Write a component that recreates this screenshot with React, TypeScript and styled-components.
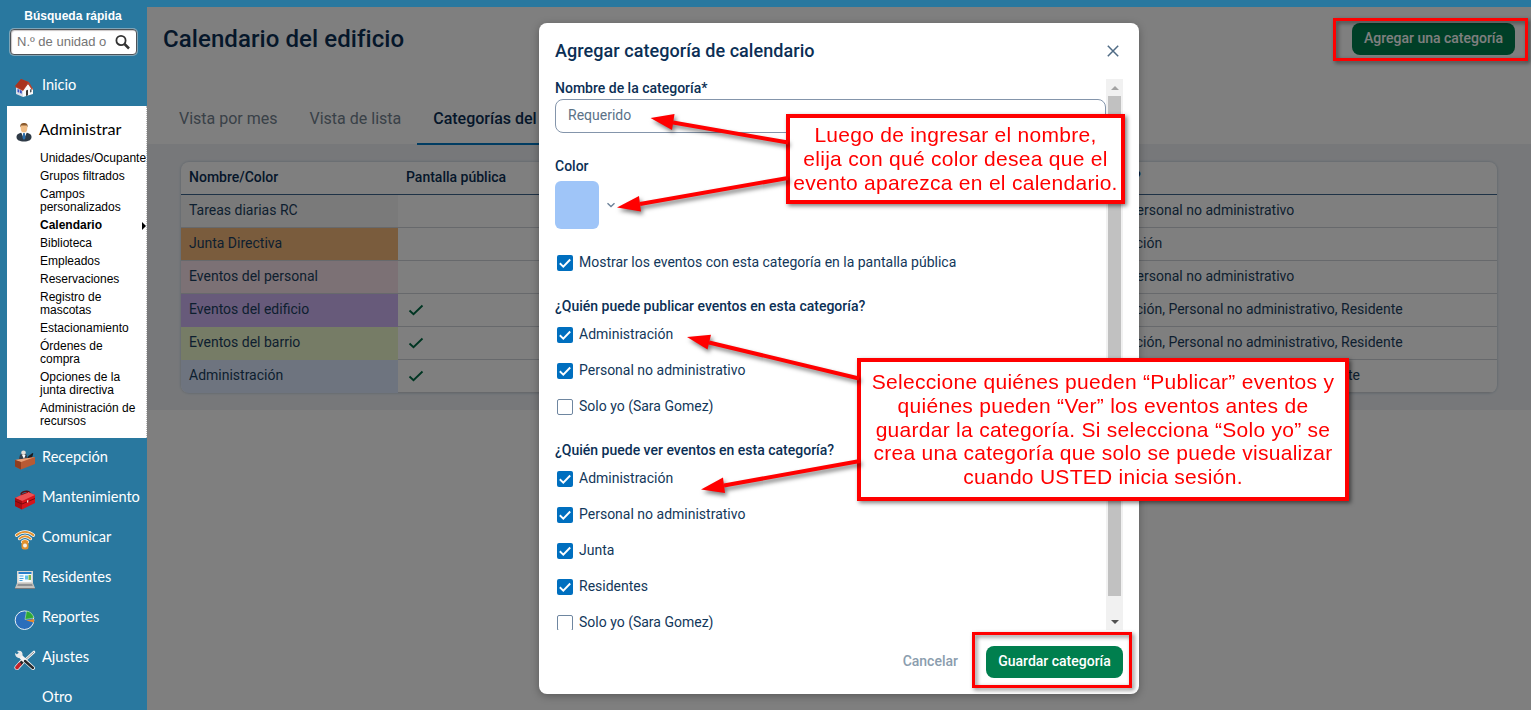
import React from 'react'
import styled, { createGlobalStyle } from 'styled-components'

const GlobalStyle = createGlobalStyle`
  * {
    box-sizing: border-box;
  }
  body {
    margin: 0;
    overflow: hidden;
    font-family: Roboto, sans-serif;
    color: #12375a;
  }
`

const Page = styled.div`
  position: relative;
  display: flex;
  width: 1531px;
  height: 710px;
  overflow: hidden;
  background: #29789f;
`

/* Sidebar */

const Sidebar = styled.aside`
  display: flex;
  flex-direction: column;
  flex: none;
  width: 147px;
`

const QuickSearch = styled.div`
  flex: none;
  height: 66px;
  padding: 9px 9px 0 10px;
`

const SearchTitle = styled.div`
  height: 20px;
  margin-right: 2px;
  text-align: center;
  color: #fff;
  font: bold 12px/14px 'Liberation Sans', sans-serif;
`

const SearchBox = styled.div`
  display: flex;
  align-items: center;
  justify-content: space-between;
  width: 127px;
  height: 26px;
  padding: 0 5px 0 6px;
  border: 1px solid #4d5358;
  border-radius: 4px;
  background: #fff;
  box-shadow: inset 1px 1px 1px #c9c5c5, 0 0 0 1px #7fa5b8;
  color: #757575;
  font: 13px/16px 'Liberation Sans', sans-serif;
  white-space: nowrap;
`

const NavItem = styled.div<{ $active?: boolean }>`
  display: flex;
  align-items: center;
  flex: none;
  height: 40px;
  padding-left: ${p => p.$active ? 7 : 14}px;
  gap: ${p => p.$active ? 5 : 6}px;
  color: ${p => p.$active ? '#000' : '#fff'};
  font: ${p => p.$active ? '16.200px' : '14.600px'}/20px Lato, sans-serif;
  svg {
    flex: none;
    margin-top: 3px;
  }
`

const NavText = styled.span<{ $first?: boolean }>`
  margin-top: -2px;
  margin-left: ${p => p.$first ? 2 : 0}px;
`

const IconSpace = styled.span`
  width: 22px;
`

const OpenSection = styled.div`
  flex: none;
  height: 332px;
  margin-left: 7px;
  padding-top: 4px;
  border-right: 1px dotted #bbb;
  background: #fff;
  overflow: hidden;
`

const SubList = styled.ul`
  display: flex;
  flex-direction: column;
  gap: 5px;
  margin: 2px 0 0;
  padding: 0 0 0 33px;
  list-style: none;
`

const SubItem = styled.li<{ $current?: boolean }>`
  display: flex;
  align-items: center;
  justify-content: space-between;
  color: #000;
  font: ${p => p.$current ? 'bold' : 'normal'} 12px/13px 'Liberation Sans', sans-serif;
  white-space: pre;
`

/* Main area */

const Main = styled.main`
  flex: 1;
  margin-top: 7px;
  background: #fff;
`

const Header = styled.header`
  display: flex;
  justify-content: space-between;
  height: 85px;
  padding: 16px 16px 0;
`

const PageTitle = styled.h1`
  margin: 0;
  color: #0b2f55;
  font-size: 24px;
  font-weight: 500;
  line-height: 32px;
  letter-spacing: 0.08px;
`

const PrimaryButton = styled.button<{ $width: number }>`
  width: ${p => p.$width}px;
  height: 32px;
  padding: 0 0 2px;
  border: none;
  border-radius: 8px;
  background: #007f4e;
  color: #fff;
  font: 500 14px/20px Roboto, sans-serif;
  white-space: nowrap;
`

const Tabs = styled.nav`
  display: flex;
  height: 52px;
  padding-left: 16px;
`

const Tab = styled.div<{ $active?: boolean }>`
  height: 53px;
  padding: 17px 16px 0;
  border-bottom: 2px solid ${p => p.$active ? '#0078c4' : 'transparent'};
  color: ${p => p.$active ? '#0b2f55' : '#73828f'};
  font-size: 16px;
  font-weight: ${p => p.$active ? 500 : 400};
  line-height: 20px;
  white-space: nowrap;
`

const Panel = styled.section`
  height: 266px;
  padding: 18px 34px;
  background: #eef1f5;
`

const Table = styled.div`
  border-radius: 8px;
  background: #fff;
  box-shadow: 0 0 2px 1px #cfd8e2;
  overflow: hidden;
`

const Row = styled.div<{ $head?: boolean }>`
  display: grid;
  grid-template-columns: 217px 328px 334px 1fr;
  height: 33px;
  border-bottom: 1px solid ${p => p.$head ? '#3c648c' : '#cfd3d8'};
  font-size: 14px;
  font-weight: ${p => p.$head ? 500 : 400};
  color: ${p => p.$head ? '#0b2f55' : '#1b3f60'};
  line-height: 18px;
`

const Cell = styled.div<{ $tint?: string }>`
  padding: 6px 8px;
  background: ${p => p.$tint ?? 'transparent'};
  white-space: nowrap;
`

const IconCell = styled(Cell)`
  padding: 8px 10px;
`

const Backdrop = styled.div`
  position: absolute;
  inset: 7px 0 0 147px;
  background: rgba(0, 0, 0, 0.5);
`

/* Dialog */

const Dialog = styled.div`
  position: absolute;
  left: 539px;
  top: 23px;
  display: flex;
  flex-direction: column;
  width: 600px;
  height: 671px;
  padding: 0 16px 16px;
  border-radius: 8px;
  background: #fff;
  box-shadow: 0 2px 8px rgba(0, 0, 0, 0.3);
`

const DialogHeader = styled.div`
  display: flex;
  align-items: center;
  justify-content: space-between;
  height: 56px;
  padding-right: 4px;
`

const DialogTitle = styled.h2`
  margin: 0;
  color: #0b2f55;
  font-size: 18px;
  font-weight: 500;
  line-height: 24px;
  letter-spacing: 0.06px;
`

const DialogBody = styled.div`
  display: flex;
  height: 551px;
  overflow: hidden;
`

const Form = styled.div`
  flex: 1;
`

const Label = styled.div<{ $top?: number }>`
  height: 18px;
  margin-top: ${p => p.$top ?? 0}px;
  color: #0b2f55;
  font-size: 14px;
  font-weight: 500;
  line-height: 18px;
`

const NameInput = styled.div`
  height: 34px;
  margin-top: 2px;
  padding: 6px 12px;
  border: 1px solid #8495ab;
  border-radius: 8px;
  color: #5b7287;
  font-size: 14px;
  line-height: 18px;
`

const ColorPicker = styled.div`
  display: flex;
  align-items: center;
  gap: 7px;
  height: 48px;
  margin: 6px 0 16px;
`

const Swatch = styled.div`
  width: 44px;
  height: 48px;
  border-radius: 6px;
  background: #9fc5f8;
`

const CheckList = styled.div`
  margin-top: 2px;
`

const CheckRow = styled.div`
  display: flex;
  align-items: center;
  gap: 6px;
  height: 36px;
  padding-left: 2px;
  font-size: 14px;
  line-height: 18px;
`

const CheckText = styled.span`
  margin-top: -2px;
`

const Box = styled.span<{ $checked: boolean }>`
  display: flex;
  width: 16px;
  height: 16px;
  border: ${p => p.$checked ? 'none' : '1.5px solid #6e86a0'};
  border-radius: 2px;
  background: ${p => p.$checked ? '#006fbf' : '#fff'};
`

const ScrollBar = styled.div`
  display: flex;
  flex-direction: column;
  align-items: center;
  width: 17px;
  background: #f1f1f1;
`

const ScrollButton = styled.div`
  display: flex;
  align-items: center;
  height: 17px;
`

const ScrollThumb = styled.div`
  width: 13px;
  height: 500px;
  margin-bottom: 17px;
  background: #c1c1c1;
`

const DialogFooter = styled.div`
  display: flex;
  align-items: center;
  justify-content: flex-end;
  gap: 28px;
  margin-top: 16px;
`

const Cancel = styled.span`
  margin-top: -2px;
  color: #8b9dae;
  font-size: 14px;
  font-weight: 500;
`

/* Notes drawn over the screen */

const Notes = styled.div`
  position: absolute;
  inset: 0;
  pointer-events: none;
`

const Arrows = styled.svg`
  position: absolute;
  inset: 0;
  filter: drop-shadow(2px 3px 2px rgba(0, 0, 0, 0.5));
`

const Frame = styled.div<{ $x: number, $y: number, $w: number, $h: number }>`
  position: absolute;
  left: ${p => p.$x}px;
  top: ${p => p.$y}px;
  width: ${p => p.$w}px;
  height: ${p => p.$h}px;
  border: 3px solid #f00;
  filter: drop-shadow(2px 2px 2px rgba(0, 0, 0, 0.5));
`

const Callout = styled(Frame)<{ $pad: number }>`
  padding-top: ${p => p.$pad}px;
  border-width: 4px;
  background: #fff;
  color: #f00;
  font: 21px/23.8px 'Liberation Sans', sans-serif;
  letter-spacing: 0.28px;
  text-align: center;
  white-space: pre;
`

const HouseIcon = () => <svg width='20' height='20' viewBox='0 0 20 20'>
  <path d='M2 8 9 11v8l-7-3z' fill='#d9dde6' />
  <path d='M9 11l5-5 5 5v5l-10 3z' fill='#fafafa' />
  <path d='M7 1l8 3 4 7-1 1-4-6-5 7-8-4z' fill='#b8442d' />
  <path d='M7 1l7 3-5 8-8-4z' fill='#a9341f' />
  <path d='M3.500 11l1.800.8v3l-1.800-.8zM6 12l1.800.8v3L6 15z' fill='#3d52c4' />
  <path d='M12 12.500l2-.8v5.500l-2 .7z' fill='#3a3636' />
  <path d='M16 11.500l1.500-.5v3l-1.500.6z' fill='#55585c' />
</svg>

const ManagerIcon = () => <svg width='20' height='20' viewBox='0 0 20 20'>
  <path d='M2.500 15c0-3 3-4.500 7.500-4.500s7.500 1.500 7.500 4.500c0 3-3 4.500-7.500 4.500S2.500 18 2.500 15z' fill='#2f3b47' />
  <path d='M7 10h6l-3 7z' fill='#fff' />
  <path d='M9.200 11h1.600l.7 5-1.500 2-1.500-2z' fill='#2b6fae' />
  <ellipse cx='10' cy='6' rx='3.300' ry='4.500' fill='#f0bd86' />
  <path d='M6.300 5.500C6 2 7.500 1 10 1s4 1 3.700 4.500L12.700 3.500H7.300z' fill='#8a5a2d' />
</svg>

const DeskIcon = () => <svg width='22' height='20' viewBox='0 0 22 20'>
  <path d='M5 9.500C5.500 5 6.500 3.500 9.500 3.500S13 5 13.500 9z' fill='#34414d' />
  <circle cx='9.500' cy='2.800' r='2.300' fill='#e5ded6' />
  <path d='M8 5h3.500L10 9z' fill='#fff' />
  <path d='M13.500 7.500l1-1.500 4-3 .8.500L18 8l-4 1z' fill='#1c1c1f' />
  <path d='M1 10l14-2 6-1v7L7 19.500l-6-3z' fill='#b85a34' />
  <path d='M1 10l13-2 7-1-14 5z' fill='#e9a077' />
  <path d='M7 12v7.500l-6-3V10z' fill='#8e3e20' />
</svg>

const ToolboxIcon = () => <svg width='22' height='20' viewBox='0 0 22 20'>
  <path d='M7 4.500c0-3 8-5 9-1' fill='none' stroke='#5b0d0f' strokeWidth='1.500' />
  <path d='M1 8l13-6 7 3v8L8 19.500 1 16z' fill='#d3151c' />
  <path d='M1 8l13-6 7 3L8 11z' fill='#ee5154' />
  <path d='M8 11v8.500L1 16V8z' fill='#a80d13' />
  <path d='M1 11l7 3 13-5.500' fill='none' stroke='#7b080c' />
  <path d='M7 4.800l7-2.500' stroke='#8c1216' />
  <path d='M13 10.500l1.300-.5v2.200l-1.300.5z' fill='#e9e2dd' />
</svg>

const SignalIcon = () => <svg width='22' height='20' viewBox='0 0 22 20'>
  <g fill='none' stroke='#fff' strokeWidth='3.200' strokeLinecap='round'>
    <path d='M2.500 5.200c5-4.500 12-4.500 17 0M5.500 8.600c3.500-3 7.500-3 11 0M8.500 11.800c1.800-1.200 3.200-1.200 5 0' />
  </g>
  <g fill='none' stroke='#e2912d' strokeWidth='1.900' strokeLinecap='round'>
    <path d='M2.500 5.200c5-4.500 12-4.500 17 0M5.500 8.600c3.500-3 7.500-3 11 0M8.500 11.800c1.800-1.200 3.200-1.200 5 0' />
  </g>
  <rect x='7.500' y='11.500' width='7' height='8' rx='2.500' fill='#e2912d' />
  <circle cx='11' cy='15.500' r='2' fill='#f6efe5' />
</svg>

const LaptopIcon = () => <svg width='22' height='20' viewBox='0 0 22 20'>
  <path d='M3 1h16v12H3z' fill='#d9d6d0' />
  <path d='M4.500 2h13v10h-13z' fill='#f4fbff' />
  <path d='M4.500 2h13v2h-13z' fill='#287fcb' />
  <path d='M5.500 5.500h4v1h-4zM5.500 8h4v1h-4zM5.500 10h3v1h-3z' fill='#42a1dc' />
  <path d='M11 5.500h3v4h-3z' fill='#5fc2e9' />
  <path d='M14.500 5h2.500v5h-2.500z' fill='#7bb84d' />
  <path d='M3 13h16l2 5H1z' fill='#c3c1bd' />
  <path d='M4 14h14l.8 2H3.200z' fill='#8e9092' />
  <path d='M1 18h20v1H1z' fill='#77797b' />
</svg>

const PieIcon = () => <svg width='22' height='20' viewBox='0 0 22 20'>
  <circle cx='10.500' cy='10.200' r='9.300' fill='#2a6ebb' stroke='#e7eff5' />
  <path d='M11 9.500 12.500 1c4 .5 6.500 3.500 7.500 7z' fill='#2faa35' stroke='#d9efd7' strokeWidth='.5' />
  <path d='M12 10.500l8-1.500v3.500z' fill='#e8892c' />
</svg>

const ToolsIcon = () => <svg width='22' height='20' viewBox='0 0 22 20'>
  <path d='M20 2 9 12' stroke='#f4f4f4' strokeWidth='2.600' strokeLinecap='round' />
  <path d='M20 2 9 12' stroke='#777' strokeWidth='.8' />
  <path d='M9 11 3 17.500' stroke='#f4f4f4' strokeWidth='5' strokeLinecap='round' />
  <path d='M8.500 11.500 5.500 15' stroke='#26282b' strokeWidth='3.400' />
  <path d='M5.500 14.500 3 17.500' stroke='#c3222a' strokeWidth='3.600' strokeLinecap='round' />
  <path d='M5 5l14 13' stroke='#f4f4f4' strokeWidth='4' strokeLinecap='round' />
  <path d='M11 11l8 7' stroke='#26282b' strokeWidth='2.400' strokeLinecap='round' />
  <path d='M3 1c4-1 6 1 5.500 4.500L6 8C3 8 1 6 1 3l3 2 1.500-1.500z' fill='#e9e9e9' />
</svg>

const CheckIcon = () => <svg width='16' height='14' viewBox='0 0 16 14'>
  <path d='M1.500 8.500 5.500 12.300 14.500 3.500' fill='none' stroke='#006b45' strokeWidth='1.900' />
</svg>

const navItems = [
  { text: 'Recepción', icon: <DeskIcon /> },
  { text: 'Mantenimiento', icon: <ToolboxIcon /> },
  { text: 'Comunicar', icon: <SignalIcon /> },
  { text: 'Residentes', icon: <LaptopIcon /> },
  { text: 'Reportes', icon: <PieIcon /> },
  { text: 'Ajustes', icon: <ToolsIcon /> },
  { text: 'Otro', icon: <IconSpace /> }
]

const subItems = [
  'Unidades/Ocupantes',
  'Grupos filtrados',
  'Campos\npersonalizados',
  'Calendario',
  'Biblioteca',
  'Empleados',
  'Reservaciones',
  'Registro de\nmascotas',
  'Estacionamiento',
  'Órdenes de\ncompra',
  'Opciones de la\njunta directiva',
  'Administración de\nrecursos'
]

const categories = [
  { name: 'Tareas diarias RC', tint: '#f4f4f4', display: false, viewers: 'Porteros, Personal no administrativo' },
  { name: 'Junta Directiva', tint: '#f5b87b', display: false, viewers: 'Administración' },
  { name: 'Eventos del personal', tint: '#f8e2ea', display: false, viewers: 'Porteros, Personal no administrativo' },
  { name: 'Eventos del edificio', tint: '#ceb5f5', display: true, viewers: 'Administración, Personal no administrativo, Residente' },
  { name: 'Eventos del barrio', tint: '#edf8cd', display: true, viewers: 'Administración, Personal no administrativo, Residente' },
  { name: 'Administración', tint: '#dce8ff', display: true, viewers: 'Administración, Miembro de la junta, Residente' }
]

const publishers = [
  { text: 'Administración', checked: true },
  { text: 'Personal no administrativo', checked: true },
  { text: 'Solo yo (Sara Gomez)', checked: false }
]

const viewers = [
  { text: 'Administración', checked: true },
  { text: 'Personal no administrativo', checked: true },
  { text: 'Junta', checked: true },
  { text: 'Residentes', checked: true },
  { text: 'Solo yo (Sara Gomez)', checked: false }
]

interface CheckboxProps {
  text: string
  checked: boolean
}

const Checkbox = ({ text, checked }: CheckboxProps): React.JSX.Element => {
  return <CheckRow>
    <Box $checked={checked}>
      {checked && <svg width='16' height='16' viewBox='0 0 16 16'>
        <path d='M2.800 8.300 6.300 11.600 13.200 4.500' fill='none' stroke='#fff' strokeWidth='1.900' />
      </svg>}
    </Box>
    <CheckText>{text}</CheckText>
  </CheckRow>
}

const Menu = (): React.JSX.Element => {
  return <Sidebar>
    <QuickSearch>
      <SearchTitle>Búsqueda rápida</SearchTitle>
      <SearchBox>
        <span>N.º de unidad o</span>
        <svg width='17' height='17' viewBox='0 0 17 17' fill='none' stroke='#333'>
          <circle cx='7' cy='6.500' r='4.600' strokeWidth='1.800' />
          <path d='M10.500 10l4.500 4.500' strokeWidth='2.500' />
        </svg>
      </SearchBox>
    </QuickSearch>
    <NavItem><HouseIcon /><NavText $first>Inicio</NavText></NavItem>
    <OpenSection>
      <NavItem $active><ManagerIcon /><NavText>Administrar</NavText></NavItem>
      <SubList>
        {subItems.map(item => <SubItem key={item} $current={item === 'Calendario'}>
          {item}
          {item === 'Calendario' && <svg width='4' height='8' viewBox='0 0 4 8'><path d='M0 0 4 4 0 8z' /></svg>}
        </SubItem>)}
      </SubList>
    </OpenSection>
    {navItems.map(item => <NavItem key={item.text}>{item.icon}<NavText>{item.text}</NavText></NavItem>)}
  </Sidebar>
}

const Calendar = (): React.JSX.Element => {
  return <Main>
    <Header>
      <PageTitle>Calendario del edificio</PageTitle>
      <PrimaryButton $width={163}>Agregar una categoría</PrimaryButton>
    </Header>
    <Tabs>
      <Tab>Vista por mes</Tab>
      <Tab>Vista de lista</Tab>
      <Tab $active>Categorías del calendario</Tab>
    </Tabs>
    <Panel>
      <Table>
        <Row $head>
          <Cell>Nombre/Color</Cell>
          <Cell>Pantalla pública</Cell>
          <Cell />
          <Cell>¿Quién ver?</Cell>
        </Row>
        {categories.map(category => <Row key={category.name}>
          <Cell $tint={category.tint}>{category.name}</Cell>
          <IconCell>{category.display && <CheckIcon />}</IconCell>
          <Cell />
          <Cell>{category.viewers}</Cell>
        </Row>)}
      </Table>
    </Panel>
  </Main>
}

const CategoryDialog = (): React.JSX.Element => {
  return <Dialog>
    <DialogHeader>
      <DialogTitle>Agregar categoría de calendario</DialogTitle>
      <svg width='12' height='12' viewBox='0 0 12 12'>
        <path d='M.8.8l10.400 10.400M11.200.8.800 11.200' stroke='#4f6b85' strokeWidth='1.500' />
      </svg>
    </DialogHeader>
    <DialogBody>
      <Form>
        <Label>Nombre de la categoría*</Label>
        <NameInput>Requerido</NameInput>
        <Label $top={24}>Color</Label>
        <ColorPicker>
          <Swatch />
          <svg width='10' height='8' viewBox='0 0 10 8'>
            <path d='M1.500 2.200 5 5.500 8.500 2.200' fill='none' stroke='#6c8299' strokeWidth='1.400' />
          </svg>
        </ColorPicker>
        <Checkbox text='Mostrar los eventos con esta categoría en la pantalla pública' checked />
        <Label $top={16}>¿Quién puede publicar eventos en esta categoría?</Label>
        <CheckList>
          {publishers.map(item => <Checkbox key={item.text} {...item} />)}
        </CheckList>
        <Label $top={16}>¿Quién puede ver eventos en esta categoría?</Label>
        <CheckList>
          {viewers.map(item => <Checkbox key={item.text} {...item} />)}
        </CheckList>
      </Form>
      <ScrollBar>
        <ScrollButton><svg width='8' height='4' viewBox='0 0 8 4'><path d='M0 4 4 0l4 4z' fill='#a3a3a3' /></svg></ScrollButton>
        <ScrollThumb />
        <ScrollButton><svg width='8' height='4' viewBox='0 0 8 4'><path d='M0 0l4 4 4-4z' fill='#505050' /></svg></ScrollButton>
      </ScrollBar>
    </DialogBody>
    <DialogFooter>
      <Cancel>Cancelar</Cancel>
      <PrimaryButton $width={137}>Guardar categoría</PrimaryButton>
    </DialogFooter>
  </Dialog>
}

const arrows = [
  { line: 'M673 122.500 788 142.500', head: '650.500,118 674.500,114 672,130' },
  { line: 'M640 204 788 178', head: '617,207.500 639,196 641,211.500' },
  { line: 'M709 342.500 859 378.500', head: '687,337 711,334.800 707.500,349.500' },
  { line: 'M724 485.500 860 461', head: '701,489.500 723,477.500 725,493' }
]

const App = (): React.JSX.Element => {
  return <Page>
    <GlobalStyle />
    <Menu />
    <Calendar />
    <Backdrop />
    <CategoryDialog />
    <Notes>
      <Frame $x={1333} $y={18} $w={195} $h={43} />
      <Frame $x={972} $y={632} $w={160} $h={56} />
      <Callout $x={786} $y={114} $w={339} $h={90} $pad={5}>
        {'Luego de ingresar el nombre,\nelija con qué color desea que el\nevento aparezca en el calendario.'}
      </Callout>
      <Callout $x={857} $y={358} $w={492} $h={143} $pad={8}>
        {'Seleccione quiénes pueden “Publicar” eventos y\nquiénes pueden “Ver” los eventos antes de\nguardar la categoría. Si selecciona “Solo yo” se\ncrea una categoría que solo se puede visualizar\ncuando USTED inicia sesión.'}
      </Callout>
      <Arrows width='1531' height='710' viewBox='0 0 1531 710'>
        {arrows.map(arrow => <g key={arrow.line}>
          <path d={arrow.line} stroke='#f00' strokeWidth='4' />
          <polygon points={arrow.head} fill='#f00' />
        </g>)}
      </Arrows>
    </Notes>
  </Page>
}

export default App
